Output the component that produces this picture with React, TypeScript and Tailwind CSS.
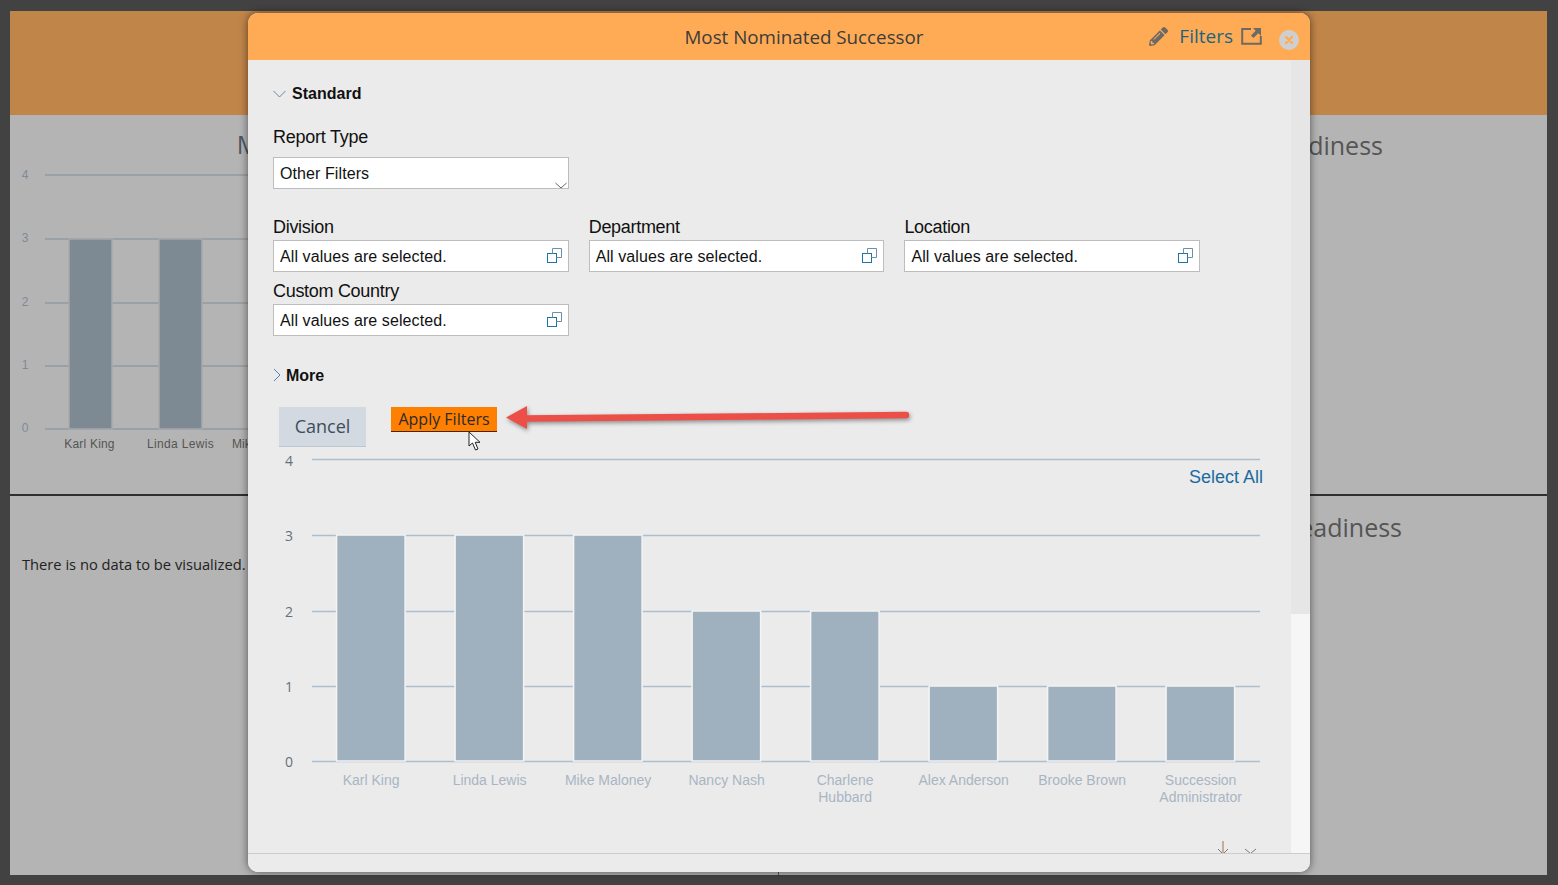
import { FaPencilAlt } from 'react-icons/fa';

const sans = "font-['Liberation_Sans',Arial,sans-serif]";
const open = "font-['Open_Sans',sans-serif]";

const modalBars = [
  { x: 336.6, v: 3, name: ['Karl King'] },
  { x: 455.1, v: 3, name: ['Linda Lewis'] },
  { x: 573.6, v: 3, name: ['Mike Maloney'] },
  { x: 692.1, v: 2, name: ['Nancy Nash'] },
  { x: 810.6, v: 2, name: ['Charlene', 'Hubbard'] },
  { x: 929.1, v: 1, name: ['Alex Anderson'] },
  { x: 1047.6, v: 1, name: ['Brooke Brown'] },
  { x: 1166.1, v: 1, name: ['Succession', 'Administrator'] },
];

function BackgroundChart() {
  // svg origin is page (10, 163)
  const ys = [266, 203, 140, 76, 12];
  return (
    <svg width="768" height="300" className={`block ${sans}`}>
      {ys.map((y, i) => (
        <g key={i}>
          <line x1="35" x2="760" y1={y} y2={y} stroke="#7f8c98" strokeWidth="1" />
          <text x="15" y={y + (i === 4 ? 4 : 3)} textAnchor="middle" fontSize="12" fill="#7e8a98">{i}</text>
        </g>
      ))}
      <rect x="59" y="76" width="43" height="190" fill="#7d8a94" stroke="#a6a9ac" strokeWidth="1.5" />
      <rect x="149" y="76" width="43" height="190" fill="#7d8a94" stroke="#a6a9ac" strokeWidth="1.5" />
      <rect x="239" y="76" width="43" height="190" fill="#7d8a94" stroke="#a6a9ac" strokeWidth="1.5" />
      <text x="79.5" y="285" textAnchor="middle" fontSize="12" letterSpacing="0.2" fill="#555">Karl King</text>
      <text x="170.5" y="285" textAnchor="middle" fontSize="12" letterSpacing="0.35" fill="#555">Linda Lewis</text>
      <text x="222" y="285" fontSize="12" fill="#555">Mike Maloney</text>
    </svg>
  );
}

function ModalChart() {
  // svg origin is page (248, 450)
  const ox = 248;
  const oy = 450;
  const ys = [761, 686, 611, 535, 459];
  return (
    <svg width="1043" height="365" className={`block ${sans}`}>
      {ys.map((y, i) => (
        <g key={i}>
          <line x1={312 - ox} x2={1260 - ox} y1={y - oy + 0.5} y2={y - oy + 0.5} stroke="#adbfce" strokeWidth="1.5" />
          <text x={289 - ox} y={y - oy + (i === 4 ? 7 : 6)} textAnchor="middle" fontSize="14" className={open} fill="#66707a">{i}</text>
        </g>
      ))}
      {modalBars.map((b) => {
        const top = ys[b.v];
        return (
          <g key={b.x}>
            <rect x={b.x - ox} y={top - oy} width="68.5" height={761 - top} fill="#9fb0be" stroke="#f4f4f4" strokeWidth="1.5" />
            {b.name.map((n, j) => (
              <text key={n} x={b.x - ox + 34.5} y={785 - oy + j * 17} textAnchor="middle" fontSize="14" fill="#a9b5c3">{n}</text>
            ))}
          </g>
        );
      })}
    </svg>
  );
}

function RestoreIcon() {
  return (
    <svg width="15" height="15" viewBox="0 0 15 15" fill="none" stroke="#1b75a8" strokeWidth="1" className="-mt-[1px]">
      <rect x="0.5" y="5.5" width="9" height="9" />
      <path d="M5.5 5.5V0.5H14.5V9.5H9.5" stroke="#6f8fa6" />
    </svg>
  );
}

function PickerField({ label }: { label: string }) {
  return (
    <div>
      <div className="h-[26px] text-[18px] leading-[26px] text-[#111] tracking-[-0.3px]">{label}</div>
      <div className="flex h-[32px] items-center justify-between border border-[#bdbdbd] bg-white pl-[6px] pr-[6px] text-[16px] text-[#111]">
        <span className="mt-[2px] tracking-[0.09px]">All values are selected.</span>
        <RestoreIcon />
      </div>
    </div>
  );
}

export default function App() {
  return (
    <div className={`relative h-[885px] w-[1558px] overflow-hidden bg-[#424242] pb-[10px] pl-[10px] pr-[11px] pt-[11px] ${open}`}>
      {/* Dashboard behind the dialog */}
      <div className="flex h-[864px] flex-col bg-[#b4b4b4]">
        <div className="h-[104px] bg-[#c08549]" />
        <div className="flex h-[381px] border-b-2 border-[#2f2f2f]">
          <div className="w-[768px]">
            <div className="h-[48px] pt-[13px] text-center text-[24.7px] leading-[34px] text-[#4d5661]">Most Nominated Successor</div>
            <BackgroundChart />
          </div>
          <div className="flex-1 pr-[164px] pt-[13px] text-right text-[25px] leading-[34px] text-[#555]">Successor Readiness</div>
        </div>
        <div className="flex flex-1">
          <div className="w-[768px] pl-[12px] pt-[57px] text-[14.7px] leading-[22px] text-[#222]">There is no data to be visualized.</div>
          <div className="flex-1 pr-[145px] pt-[14px] text-right text-[25px] leading-[34px] text-[#555]">Successors by Readiness</div>
        </div>
      </div>
      <div className="absolute left-[778px] top-[872px] h-[3px] w-px bg-[#555]" />

      {/* Dialog */}
      <div className="absolute left-[248px] top-[13px] flex h-[859px] w-[1062px] flex-col overflow-hidden rounded-[10px] bg-[#ebebeb] shadow-[0_0_8px_rgba(0,0,0,0.55)]">
        <div className="relative flex h-[47px] items-center justify-center bg-[#ffab55] text-[18.8px] text-[#3c3c3c]">
          <span className="ml-[50px] mt-[1px]">Most Nominated Successor</span>
          <div className="absolute right-[48px] top-[11px] flex items-center">
            <FaPencilAlt className="mr-[11px] h-[19px] w-[19px] text-[#6d6a65]" />
            <span className="text-[19px] leading-[24px] text-[#1b6583]">Filters</span>
            <svg width="21" height="18" viewBox="0 0 21 18" fill="none" className="ml-[8px]">
              <path d="M10 2H1.2V16.8H19.8V9" stroke="#6d6a65" strokeWidth="2" />
              <path d="M12 1H20V9L17.3 6.3L12.5 11L10 8.5L14.7 3.7Z" fill="#6d6a65" />
            </svg>
          </div>
          <div className="absolute right-[11px] top-[17px] flex h-[20px] w-[20px] items-center justify-center rounded-full bg-[#cfcfcf]">
            <svg width="10" height="10" viewBox="0 0 10 10" stroke="#ffab55" strokeWidth="2.4" strokeLinecap="round">
              <path d="M2 2L8 8M8 2L2 8" />
            </svg>
          </div>
        </div>

        <div className="flex h-[793px]">
          <div className={`relative w-[1043px] overflow-hidden pt-[24px] ${sans}`}>
            <div className="flex h-[20px] items-center pl-[25px] text-[16px] font-bold tracking-[0.03px] text-[#111]">
              <svg width="13" height="8" viewBox="0 0 13 8" fill="none" stroke="#6f8296" strokeWidth="1" className="mr-[6px]">
                <path d="M0.5 1L6.5 7L12.5 1" />
              </svg>
              Standard
            </div>

            <div className="mt-[22px] h-[31px] pl-[25px] text-[18px] leading-[22px] tracking-[-0.25px] text-[#111]">Report Type</div>
            <div className="relative ml-[25px] flex h-[32px] w-[296px] items-center border border-[#bdbdbd] bg-white pl-[6px] text-[16px] tracking-[0.09px] text-[#111]">
              <span className="mt-[2px]">Other Filters</span>
              <svg width="12" height="7" viewBox="0 0 12 7" fill="none" stroke="#55677a" strokeWidth="1" className="absolute bottom-[-1px] right-[1px]">
                <path d="M0.5 1L6 6L11.5 1" />
              </svg>
            </div>

            <div className="ml-[25px] mt-[25px] grid grid-cols-[repeat(3,295.7px)] gap-x-[20px] gap-y-[6px]">
              <PickerField label="Division" />
              <PickerField label="Department" />
              <PickerField label="Location" />
              <PickerField label="Custom Country" />
            </div>

            <div className="mt-[29px] flex h-[20px] items-center pl-[25px] text-[16px] font-bold text-[#111]">
              <svg width="8" height="14" viewBox="0 0 8 14" fill="none" stroke="#4b86b4" strokeWidth="1" className="mr-[5px]">
                <path d="M1 1L7 7L1 13" />
              </svg>
              <span className="mt-[2px]">More</span>
            </div>

            <div className={`mt-[22px] flex items-start pl-[31px] ${open}`}>
              <button className="h-[40px] w-[87px] border-b border-[#bcc6ce] bg-[#d2d9e0] text-[18px] text-[#3e4d5c]">Cancel</button>
              <button className="ml-[25px] h-[25px] w-[106px] border-b border-[#4a2500] bg-[#ff7f00] text-[16px] leading-[23px] text-[#2b2b2b]">Apply Filters</button>
            </div>

            <div className="relative mt-[3px]">
              <ModalChart />
              <div className="absolute right-[28px] top-[16px] text-[18px] leading-[22px] text-[#1c6aa0]">Select All</div>
            </div>

            {/* Row of chart tools, cut by the footer */}
            <svg width="50" height="12" viewBox="0 0 50 12" fill="none" className="absolute bottom-0 left-[966px]">
              <path d="M9 0V12" stroke="#b5835a" strokeWidth="1.2" />
              <path d="M4 8L8 12M14 8L10 12" stroke="#778" strokeWidth="1" />
              <path d="M31 8L36.5 12.5L42 8" stroke="#778" strokeWidth="1" />
            </svg>
          </div>
          <div className="flex w-[19px] flex-col">
            <div className="h-[554px] bg-[#e6e6e6]" />
            <div className="flex-1 bg-[#f6f6f6]" />
          </div>
        </div>

        <div className="flex-1 border-t border-[#cccccc] bg-[#ebebeb]" />

        {/* Annotation arrow */}
        <svg width="410" height="40" viewBox="0 0 410 40" fill="none" className="absolute left-[255px] top-[386px] drop-shadow-[1px_2px_2px_rgba(0,0,0,0.4)]">
          <path d="M20 19.5L403 16" stroke="#ec4f48" strokeWidth="6.5" strokeLinecap="round" />
          <path d="M3 18.5L24 7V30Z" fill="#ec4f48" />
        </svg>
      </div>

      {/* Mouse pointer */}
      <svg width="14" height="20" viewBox="0 0 14 20" className="absolute left-[468px] top-[431px]">
        <path d="M1 1V15L4.5 12L7.5 19L10 18L7.2 11.3H12Z" fill="#fff" stroke="#222" strokeWidth="1" />
      </svg>
    </div>
  );
}
